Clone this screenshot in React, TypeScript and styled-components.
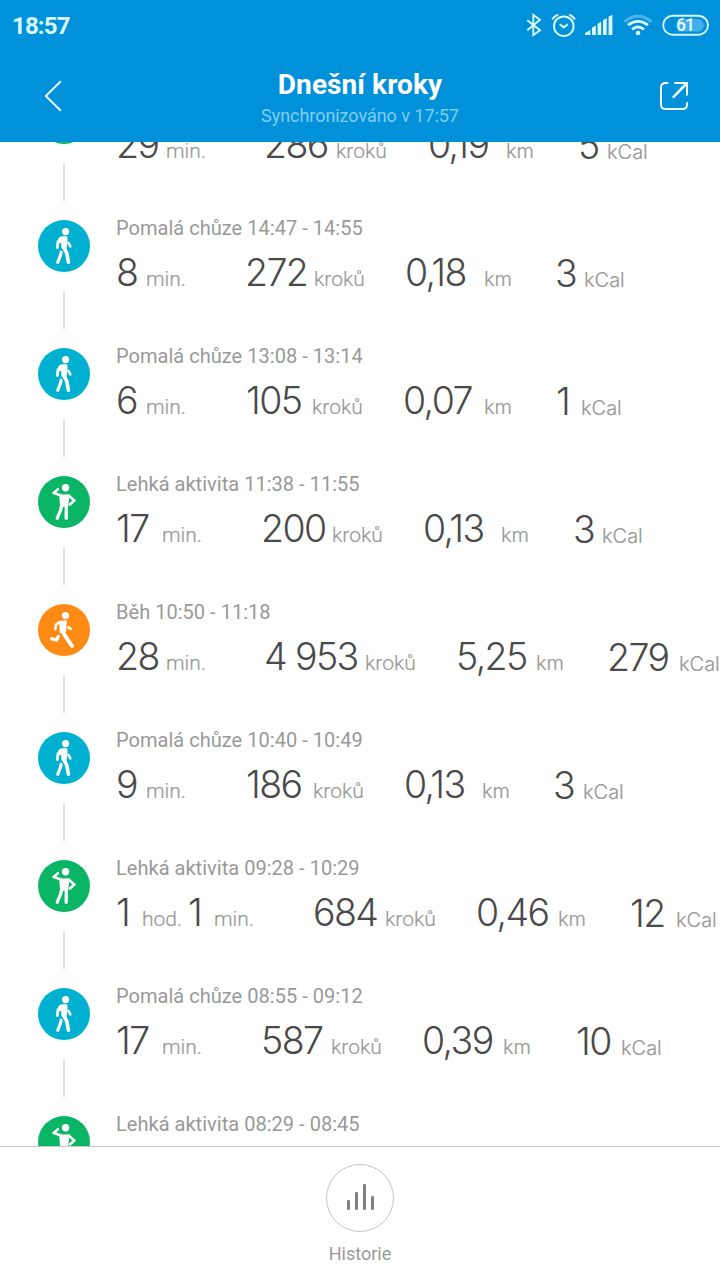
import React from "react";
import styled, { createGlobalStyle } from "styled-components";

const GlobalStyle = createGlobalStyle`
  * { box-sizing: border-box; }
  html, body { margin: 0; padding: 0; background: #fff; }
  body { font-family: Roboto, "Liberation Sans", sans-serif; overflow: hidden; }
`;

const Screen = styled.div`
  width: 720px;
  height: 1280px;
  display: flex;
  flex-direction: column;
  overflow: hidden;
  background: #fff;
`;

const Header = styled.header`
  flex: none;
  height: 142px;
  background: #0091da;
  color: #fff;
`;

const StatusBar = styled.div`
  height: 50px;
  padding: 2px 10px 0 12px;
  display: flex;
  align-items: center;
  justify-content: space-between;
`;

const Clock = styled.span`
  font-size: 24px;
  font-weight: 700;
  line-height: 28px;
  letter-spacing: -0.85px;
  color: #d9f8ff;
`;

const StatusIcons = styled.svg`
  display: block;
  width: 188px;
  height: 28px;
`;

const TitleBar = styled.div`
  height: 92px;
  padding: 0 24px 0 24px;
  display: grid;
  grid-template-columns: 60px 1fr 60px;
`;

const IconButton = styled.button`
  width: 60px;
  height: 60px;
  margin-top: 16px;
  padding: 0;
  border: 0;
  background: none;
  color: #fff;
  svg { display: block; }
`;

const Titles = styled.div`
  padding-top: 18px;
  text-align: center;
`;

const Title = styled.h1`
  margin: 0;
  font-size: 28px;
  line-height: 34px;
  font-weight: 700;
  letter-spacing: 0.08px;
`;

const Subtitle = styled.p`
  margin: 3px 0 0;
  font-size: 18px;
  line-height: 22px;
  letter-spacing: -0.05px;
  color: #80cef2;
`;

const Viewport = styled.main`
  flex: 1;
  min-height: 0;
  overflow: hidden;
`;

const Timeline = styled.div`
  margin-top: -50px;
`;

const Entry = styled.article`
  height: 128px;
  padding-left: 38px;
  display: flex;
`;

const Rail = styled.div`
  flex: none;
  width: 78px;
  display: flex;
  flex-direction: column;
  align-items: flex-start;
`;

const Badge = styled.div<{ $color: string }>`
  width: 52px;
  height: 52px;
  border-radius: 50%;
  background: ${(p) => p.$color};
  svg { display: block; }
`;

const Connector = styled.div`
  width: 2px;
  height: 38px;
  margin: 19px 0 0 25px;
  background: #e2e2e2;
`;

const Details = styled.div`
  flex: none;
  width: 604px;
`;

const Label = styled.div`
  height: 24px;
  margin-top: -4px;
  font-size: 20px;
  line-height: 24px;
  letter-spacing: 0.03px;
  color: #999;
  white-space: nowrap;
`;

const Metrics = styled.div`
  margin-top: 7px;
  height: 53px;
  display: flex;
  align-items: flex-start;
`;

const Metric = styled.div<{ $low?: boolean }>`
  flex: none;
  display: flex;
  align-items: baseline;
  margin-top: ${(p) => (p.$low ? 1 : 0)}px;
`;

const Value = styled.span<{ $w: number }>`
  flex: none;
  width: ${(p) => p.$w}px;
  font-family: Inter, Roboto, sans-serif;
  font-size: 37.5px;
  line-height: 52px;
  font-weight: 300;
  letter-spacing: -1.6px;
  color: #4a4a4a;
  white-space: pre;
`;

const Unit = styled.span<{ $w: number; $metric?: boolean }>`
  flex: none;
  width: ${(p) => p.$w}px;
  font-family: ${(p) => (p.$metric ? "Inter" : "Roboto")}, sans-serif;
  font-size: ${(p) => (p.$metric ? 20 : 21)}px;
  font-weight: 300;
  -webkit-text-stroke: 0.2px #999;
  color: #999;
  white-space: nowrap;
`;

const Footer = styled.footer`
  flex: none;
  height: 134px;
  border-top: 1px solid #c8c8c8;
  padding-top: 17px;
  display: flex;
  flex-direction: column;
  align-items: center;
`;

const HistoryButton = styled.div`
  width: 68px;
  height: 68px;
  border: 1px solid #c4c4c4;
  border-radius: 50%;
  display: flex;
  align-items: flex-end;
  justify-content: center;
  gap: 5px;
  padding-bottom: 21px;
`;

const Bar = styled.i<{ $h: number }>`
  width: 3px;
  height: ${(p) => p.$h}px;
  border-radius: 1.3px;
  background: #808080;
`;

const FooterLabel = styled.span`
  margin-top: 11px;
  font-size: 18px;
  line-height: 22px;
  color: #999;
`;

type Kind = "walk" | "light" | "run";

const colors: Record<Kind, string> = {
  walk: "#00b0d0",
  light: "#0ab665",
  run: "#ff8a14",
};

function Figure({ kind }: { kind: Kind }) {
  const stroke = {
    fill: "none",
    stroke: "#fff",
    strokeLinecap: "round" as const,
    strokeLinejoin: "round" as const,
  };
  return (
    <svg width="52" height="52" viewBox="0 0 52 52">
      {kind === "walk" && (
        <>
          <circle cx="27.6" cy="11.6" r="3.6" fill="#fff" />
          <path d="M21.5 17.6 Q25 15 29.4 16.8 L29.6 22 L28.4 29.5 L23.6 28.5 L23.2 23 L21 23.5 Z" fill="#fff" />
          <path d="M22.6 18 L19.8 22.2 L19.3 27.6" {...stroke} strokeWidth="2.7" />
          <path d="M30.6 23 L32.3 26.3" {...stroke} strokeWidth="2.6" />
          <path d="M25.6 27.2 L28.7 33 L30.4 42.2" {...stroke} strokeWidth="3.6" />
          <path d="M23.2 32.2 L22.2 36 L19.7 42.3" {...stroke} strokeWidth="3.2" />
        </>
      )}
      {kind === "light" && (
        <>
          <circle cx="27.6" cy="11.7" r="3.7" fill="#fff" />
          <path d="M22 19.3 H30.6 L29.4 30 H22.8 Z" fill="#fff" stroke="#fff" strokeWidth="1.6" strokeLinejoin="round" />
          <path d="M30.4 19.4 L36.4 24.4 L31.8 28.4" {...stroke} strokeWidth="2.6" />
          <path d="M23 19.6 L15.6 17 L20 13.2" {...stroke} strokeWidth="2.6" />
          <path d="M23.7 29.5 L22.4 34.5 L19.2 42.3" {...stroke} strokeWidth="3.2" />
          <path d="M28.3 29.5 L28.2 42.3" {...stroke} strokeWidth="3.3" />
        </>
      )}
      {kind === "run" && (
        <>
          <circle cx="27.5" cy="11.5" r="3.6" fill="#fff" />
          <path d="M22.3 18 L27.8 17.2 L27.2 27 L22.6 28 Z" fill="#fff" stroke="#fff" strokeWidth="2" strokeLinejoin="round" />
          <path d="M22 17.8 L18.1 20.5 L17.3 25" {...stroke} strokeWidth="2.5" />
          <path d="M30.6 23.5 L32.4 24.7" {...stroke} strokeWidth="2.8" />
          <path d="M24.5 27.5 L28.5 34 L34 41.8" {...stroke} strokeWidth="3.9" />
          <path d="M20.3 32.5 L18.6 36 L13.8 34.8" {...stroke} strokeWidth="3.4" />
        </>
      )}
    </svg>
  );
}

/* Each part: value, its slot width, unit, and the slot width up to the next part. */
type Part = [string, number, string, number];

const entries: { kind: Kind; label: string; parts: Part[] }[] = [
  { kind: "light", label: "Lehká aktivita 15:02 - 15:31", parts: [["29", 50, "min.", 98], ["286", 72, "kroků", 92], ["0,19", 78, "km", 72], ["5", 29, "kCal", 60]] },
  { kind: "walk", label: "Pomalá chůze 14:47 - 14:55", parts: [["8", 30, "min.", 99], ["272", 69, "kroků", 91], ["0,18", 79, "km", 71], ["3", 29, "kCal", 60]] },
  { kind: "walk", label: "Pomalá chůze 13:08 - 13:14", parts: [["6", 30, "min.", 100], ["105", 66, "kroků", 91], ["0,07", 81, "km", 72], ["1", 25, "kCal", 60]] },
  { kind: "light", label: "Lehká aktivita 11:38 - 11:55", parts: [["17", 46, "min.", 99], ["200", 71, "kroků", 91], ["0,13", 78, "km", 72], ["3", 29, "kCal", 60]] },
  { kind: "run", label: "Běh 10:50 - 11:18", parts: [["28", 50, "min.", 98], ["4 953", 101, "kroků", 91], ["5,25", 80, "km", 71], ["279", 72, "kCal", 60]] },
  { kind: "walk", label: "Pomalá chůze 10:40 - 10:49", parts: [["9", 30, "min.", 100], ["186", 67, "kroků", 91], ["0,13", 78, "km", 71], ["3", 30, "kCal", 60]] },
  { kind: "light", label: "Lehká aktivita 09:28 - 10:29", parts: [["1", 26, "hod.", 46], ["1", 26, "min.", 99], ["684", 72, "kroků", 91], ["0,46", 82, "km", 72], ["12", 46, "kCal", 60]] },
  { kind: "walk", label: "Pomalá chůze 08:55 - 09:12", parts: [["17", 46, "min.", 99], ["587", 70, "kroků", 91], ["0,39", 81, "km", 73], ["10", 45, "kCal", 60]] },
  { kind: "light", label: "Lehká aktivita 08:29 - 08:45", parts: [] },
];

function StatusGlyphs() {
  return (
    <StatusIcons viewBox="522 12 188 28" fill="none" stroke="#d9f8ff">
      <path d="M527.3 20.3 L540 30.3 L533.3 35.2 V14.8 L540 19.8 L527.3 30.3" strokeWidth="1.9" />
      <circle cx="563.8" cy="26.2" r="9.8" strokeWidth="2" />
      <path d="M559.7 24.3 L563.8 27.4 L567.7 24.3" strokeWidth="2" />
      <path d="M552.3 19.5 Q554.3 15.8 558.3 14.6 M569 14.6 Q573 15.8 574.8 19.5" strokeWidth="2" />
      <g fill="#d9f8ff" stroke="none">
        <path d="M585 35 V33 L590.4 30 V35 Z" />
        <path d="M592 35 V27.8 L595.8 25.6 V35 Z" />
        <path d="M597.6 35 V24 L601.2 21.6 V35 Z" />
        <path d="M603 35 V20.2 L606.7 18 V35 Z" />
        <path d="M608.6 35 V16.8 L612.4 14.8 V35 Z" />
      </g>
      <path d="M624.5 21.8 Q638 10.8 651.5 21.8" strokeWidth="3" stroke="#4fb5e8" />
      <path d="M628 25.2 Q638 17.6 648 25.2 M632 29.4 Q638 24.6 644 29.4" strokeWidth="2.8" />
      <circle cx="638" cy="33" r="2.3" fill="#d9f8ff" stroke="none" />
      <path d="M678 19 H697.5 A6.3 6.3 0 0 1 697.5 31.6 H678 Z" fill="#44afe6" stroke="none" />
      <rect x="663.2" y="15.7" width="44.8" height="19" rx="9.5" strokeWidth="1.9" />
      <text x="685" y="31.2" textAnchor="middle" fill="#d9f8ff" stroke="none" fontFamily="Roboto" fontSize="17.5" fontWeight="600" letterSpacing="-1">61</text>
    </StatusIcons>
  );
}

export default function App() {
  return (
    <Screen>
      <GlobalStyle />
      <Header>
        <StatusBar>
          <Clock>18:57</Clock>
          <StatusGlyphs />
        </StatusBar>
        <TitleBar>
          <IconButton aria-label="Zpět">
            <svg width="60" height="60" viewBox="0 0 60 60" fill="none" stroke="#e6fbff" strokeWidth="2" strokeLinecap="round" strokeLinejoin="round">
              <path d="M36.3 15.8 L21.8 30 L36.3 44.2" />
            </svg>
          </IconButton>
          <Titles>
            <Title>Dnešní kroky</Title>
            <Subtitle>Synchronizováno v 17:57</Subtitle>
          </Titles>
          <IconButton aria-label="Sdílet">
            <svg width="60" height="60" viewBox="0 0 60 60" fill="none" stroke="#f0fdff" strokeWidth="2">
              <path d="M32.3 17 H29.5 Q25 17 25 21.5 V38.5 Q25 43 29.5 43 H46.5 Q51 43 51 38.5 V36.3" />
              <path d="M38.3 17 H51 V29.5" />
              <path d="M50.5 17.5 L37.6 30.8" strokeLinecap="round" strokeWidth="2.6" />
            </svg>
          </IconButton>
        </TitleBar>
      </Header>
      <Viewport>
        <Timeline>
          {entries.map((e) => (
            <Entry key={e.label}>
              <Rail>
                <Badge $color={colors[e.kind]}>
                  <Figure kind={e.kind} />
                </Badge>
                <Connector />
              </Rail>
              <Details>
                <Label>{e.label}</Label>
                <Metrics>
                  {e.parts.map(([value, vw, unit, uw], i) => (
                    <Metric key={i} $low={unit === "kCal"}>
                      <Value $w={vw}>{value}</Value>
                      <Unit $w={uw} $metric={unit === "km" || unit === "kCal"}>{unit}</Unit>
                    </Metric>
                  ))}
                </Metrics>
              </Details>
            </Entry>
          ))}
        </Timeline>
      </Viewport>
      <Footer>
        <HistoryButton>
          <Bar $h={10} />
          <Bar $h={18} />
          <Bar $h={26} />
          <Bar $h={14} />
        </HistoryButton>
        <FooterLabel>Historie</FooterLabel>
      </Footer>
    </Screen>
  );
}
